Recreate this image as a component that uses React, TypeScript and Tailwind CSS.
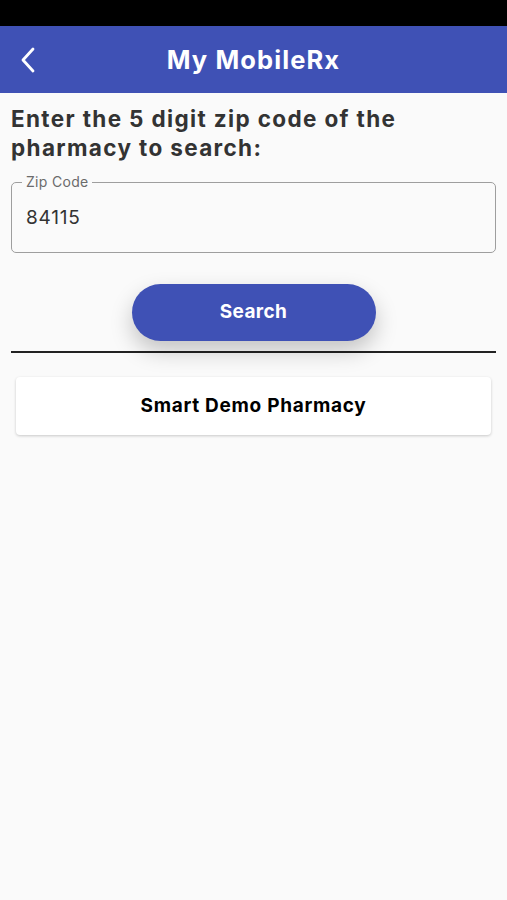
import React from "react";

const App = () => {
  const [zip, setZip] = React.useState("84115");

  return (
    <div className="min-h-[900px] w-[507px] bg-[#fafafa] font-['Inter',sans-serif]">
      {/* status bar */}
      <div className="h-[26px] bg-black" />

      {/* app bar */}
      <header className="relative flex h-[67px] items-center justify-center bg-[#3f51b5]">
        <button className="absolute left-[18px] top-[21px] text-white">
          <svg width="20" height="26" viewBox="0 0 20 26" fill="none">
            <path d="M15 2 L5 13 L15 24" stroke="white" strokeWidth="2.8" strokeLinecap="round" strokeLinejoin="round" />
          </svg>
        </button>
        <h1 className="mt-[2px] text-[25.5px] font-bold tracking-[1.1px] text-white">My MobileRx</h1>
      </header>

      <main className="px-[11px]">
        <p className="mt-[11px] text-[22.5px] font-bold leading-[29px] tracking-[1.35px] text-[#333333]">
          Enter the 5 digit zip code of the pharmacy to search:
        </p>

        {/* zip field */}
        <fieldset className="mt-[13px] h-[78px] rounded-[5px] border border-[#9e9e9e] px-[10px]">
          <legend className="px-[4px] text-[14px] leading-[14px] tracking-[0.3px] text-[#6b6b6b]">Zip Code</legend>
          <input
            value={zip}
            onChange={(e) => setZip(e.target.value)}
            className="mt-[15px] w-full bg-transparent px-[4px] text-[19px] tracking-[0.8px] text-[#333333] outline-none"
          />
        </fieldset>

        <div className="mt-[31px] flex justify-center">
          <button className="h-[57px] w-[244px] rounded-full bg-[#3f51b5] text-[19px] font-bold tracking-[0.4px] text-white shadow-[0_10px_22px_rgba(0,0,0,0.22)]">
            Search
          </button>
        </div>

        <div className="mt-[10px] h-[2px] bg-[#222222]" />

        <div className="mx-[5px] mt-[24px] flex h-[58px] items-center justify-center rounded-[4px] bg-white shadow-[0_1px_3px_rgba(0,0,0,0.2)]">
          <span className="text-[19px] font-bold tracking-[0.7px] text-black">Smart Demo Pharmacy</span>
        </div>
      </main>
    </div>
  );
};

export default App;
